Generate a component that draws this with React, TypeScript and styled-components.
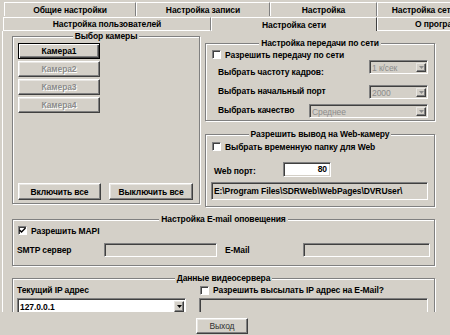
import styled, { createGlobalStyle } from 'styled-components';

const GlobalStyle = createGlobalStyle`
  html, body {
    margin: 0;
    padding: 0;
    background: #d4d0c8;
  }
  body {
    font-family: 'Liberation Sans', Arial, sans-serif;
    font-size: 8.5px;
    letter-spacing: -0.1px;
    font-weight: bold;
    color: #000;
  }
  * {
    box-sizing: border-box;
  }
`;

const Window = styled.div`
  width: 450px;
  height: 335px;
  overflow: hidden;
  background: #d4d0c8;
  display: flex;
  flex-direction: column;
`;

const TabRow = styled.div<{ $top?: boolean }>`
  display: flex;
  flex: none;
  height: 14px;
  margin-top: ${(p) => (p.$top ? 2 : 1)}px;
  padding-left: ${(p) => (p.$top ? 4 : 3)}px;
  white-space: nowrap;
`;

const Tab = styled.div<{ $w: number; $active?: boolean; $bottom?: boolean }>`
  flex: none;
  width: ${(p) => p.$w}px;
  height: 100%;
  border-top: 1px solid #fff;
  border-left: 1px solid #fff;
  border-right: 1px solid ${(p) => (p.$active ? '#404040' : '#808080')};
  border-bottom: ${(p) => (p.$bottom && !p.$active ? '1px solid #fff' : 'none')};
  display: flex;
  align-items: center;
  justify-content: center;
  line-height: 12px;
  overflow: hidden;
`;

const Page = styled.div`
  flex: none;
  margin-left: 2px;
  width: 460px;
  height: 281px;
  overflow: hidden;
  border-left: 1px solid #fff;
  padding-left: 9px;
`;

const TopGrid = styled.div`
  display: grid;
  grid-template-columns: 188px 230px;
  column-gap: 5px;
  align-items: start;
`;

const Group = styled.div<{ $h?: number; $mt?: number; $w?: number }>`
  display: flex;
  flex-direction: column;
  width: ${(p) => (p.$w ? `${p.$w}px` : 'auto')};
  height: ${(p) => (p.$h ? `${p.$h}px` : 'auto')};
  margin-top: ${(p) => p.$mt ?? 0}px;
  border: 1px solid #808080;
  box-shadow: inset 1px 1px #fff, 1px 1px #fff;
`;

const GroupTitle = styled.div`
  align-self: center;
  margin-top: -6px;
  height: 11px;
  line-height: 11px;
  padding: 0 2px;
  background: #d4d0c8;
  white-space: nowrap;
`;

const CamList = styled.div`
  display: flex;
  flex-direction: column;
  gap: 2px;
  margin-top: 1px;
  padding-left: 5px;
`;

const Button = styled.button<{ $w: number; $h?: number; $default?: boolean; $plain?: boolean }>`
  width: ${(p) => p.$w}px;
  height: ${(p) => p.$h ?? 16}px;
  padding: 0;
  margin: 0;
  background: #d4d0c8;
  font-family: inherit;
  font-size: 8.5px;
  letter-spacing: -0.1px;
  font-weight: ${(p) => (p.$plain ? 'normal' : 'bold')};
  color: ${(p) => (p.$plain ? '#303030' : '#000')};
  border: 1px solid;
  border-color: ${(p) => (p.$default ? '#000' : '#fff #404040 #404040 #fff')};
  box-shadow: ${(p) =>
    p.$default
      ? 'inset 1px 1px #fff, inset -1px -1px #404040, inset -2px -2px #808080'
      : 'inset -1px -1px #808080, inset 1px 1px #e8e6e2'};
  &:disabled {
    color: #8c8c8c;
    text-shadow: 1px 1px #fff;
  }
`;

const BottomButtons = styled.div`
  display: flex;
  gap: 8px;
  margin-top: auto;
  padding: 0 0 3px 5px;
`;

const RightColumn = styled.div`
  display: flex;
  flex-direction: column;
  gap: 13px;
  padding-top: 12px;
`;

const GroupBody = styled.div<{ $pl: number; $pr?: number; $pb?: number }>`
  display: flex;
  flex-direction: column;
  padding: 0 ${(p) => p.$pr ?? 0}px ${(p) => p.$pb ?? 0}px ${(p) => p.$pl}px;
`;

const CheckRow = styled.label<{ $mt?: number; $ml?: number }>`
  display: flex;
  align-items: center;
  gap: 4px;
  height: 11px;
  margin-top: ${(p) => p.$mt ?? 0}px;
  margin-left: ${(p) => p.$ml ?? 0}px;
  white-space: nowrap;
`;

const Box = styled.span`
  flex: none;
  width: 9px;
  height: 9px;
  background: #fff;
  border: 1px solid;
  border-color: #808080 #fff #fff #808080;
  box-shadow: inset 1px 1px #404040;
  display: flex;
  align-items: center;
  justify-content: center;
`;

const SettingRow = styled.div<{ $h: number }>`
  display: flex;
  align-items: flex-start;
  justify-content: space-between;
  height: ${(p) => p.$h}px;
`;

const Label = styled.span<{ $mt?: number; $ml?: number; $w?: number }>`
  display: block;
  line-height: 11px;
  margin-top: ${(p) => p.$mt ?? 0}px;
  margin-left: ${(p) => p.$ml ?? 0}px;
  width: ${(p) => (p.$w ? `${p.$w}px` : 'auto')};
  flex: none;
  white-space: nowrap;
`;

const Field = styled.div<{ $w: number; $h: number; $white?: boolean; $right?: boolean; $ml?: number; $mt?: number }>`
  flex: none;
  width: ${(p) => p.$w}px;
  height: ${(p) => p.$h}px;
  margin-left: ${(p) => p.$ml ?? 0}px;
  margin-top: ${(p) => p.$mt ?? 0}px;
  background: ${(p) => (p.$white ? '#fff' : '#d4d0c8')};
  border: 1px solid;
  border-color: #808080 #fff #fff #808080;
  box-shadow: inset 1px 1px #404040, inset -1px -1px #d4d0c8;
  display: flex;
  align-items: center;
  justify-content: ${(p) => (p.$right ? 'flex-end' : 'flex-start')};
  padding: 0 3px 0 2px;
  white-space: nowrap;
  overflow: hidden;
  line-height: 11px;
`;

const ComboBox = styled.div<{ $w: number; $h: number; $white?: boolean; $disabled?: boolean }>`
  flex: none;
  width: ${(p) => p.$w}px;
  height: ${(p) => p.$h}px;
  background: ${(p) => (p.$white ? '#fff' : '#d4d0c8')};
  border: 1px solid;
  border-color: #808080 #fff #fff #808080;
  box-shadow: inset 1px 1px #404040;
  display: flex;
  align-items: stretch;
  padding: 2px 1px 1px 2px;
  color: ${(p) => (p.$disabled ? '#8c8c8c' : '#000')};
  font-weight: ${(p) => (p.$disabled ? 'normal' : 'bold')};
`;

const ComboText = styled.span`
  flex: 1;
  display: flex;
  align-items: center;
  line-height: 10px;
  white-space: nowrap;
`;

const ComboArrow = styled.span`
  flex: none;
  width: 10px;
  max-height: 11px;
  background: #d4d0c8;
  border: 1px solid;
  border-color: #e8e6e2 #404040 #404040 #e8e6e2;
  box-shadow: inset -1px -1px #808080;
  display: flex;
  align-items: center;
  justify-content: center;
`;

const PortRow = styled.div`
  display: flex;
  align-items: center;
  height: 15px;
  margin-top: 10px;
`;

const MailRow = styled.div`
  display: grid;
  grid-template-columns: 87px 113px 86px 127px;
  align-items: center;
  height: 14px;
  margin-top: 7px;
`;

const IpRow = styled.div<{ $h: number; $mt?: number }>`
  display: grid;
  grid-template-columns: 182px 229px;
  align-items: center;
  height: ${(p) => p.$h}px;
  margin-top: ${(p) => p.$mt ?? 0}px;
`;

const Footer = styled.div`
  display: flex;
  padding: 6px 0 0 196px;
`;

const Check = ({ checked }: { checked?: boolean }) => (
  <Box>
    {checked && (
      <svg width="7" height="7" viewBox="0 0 7 7">
        <path d="M0.5 3 L2.5 5 L6.5 1" stroke="#000" strokeWidth="1.4" fill="none" />
      </svg>
    )}
  </Box>
);

const Combo = ({
  value,
  w,
  h,
  white,
  disabled,
}: {
  value: string;
  w: number;
  h: number;
  white?: boolean;
  disabled?: boolean;
}) => (
  <ComboBox $w={w} $h={h} $white={white} $disabled={disabled}>
    <ComboText>{value}</ComboText>
    <ComboArrow>
      <svg width="5" height="3" viewBox="0 0 5 3">
        <path d="M0 0 H5 L2.5 3 Z" fill={disabled ? '#8c8c8c' : '#000'} />
      </svg>
    </ComboArrow>
  </ComboBox>
);

const cameras = ['Камера1', 'Камера2', 'Камера3', 'Камера4'];

export default function App() {
  return (
    <>
      <GlobalStyle />
      <Window>
        <TabRow $top>
          <Tab $w={132}>Общие настройки</Tab>
          <Tab $w={134}>Настройка записи</Tab>
          <Tab $w={107}>Настройка</Tab>
          <Tab $w={110}>Настройка сетевых</Tab>
        </TabRow>
        <TabRow>
          <Tab $w={208} $bottom>
            Настройка пользователей
          </Tab>
          <Tab $w={166} $bottom $active>
            Настройка сети
          </Tab>
          <Tab $w={130} $bottom>
            О программе
          </Tab>
        </TabRow>
        <Page>
          <TopGrid>
            <Group $h={168} $mt={5}>
              <GroupTitle>Выбор камеры</GroupTitle>
              <CamList>
                {cameras.map((c, i) => (
                  <Button key={c} $w={82} $default={i === 0} disabled={i !== 0}>
                    {c}
                  </Button>
                ))}
              </CamList>
              <BottomButtons>
                <Button $w={83} $h={17}>
                  Включить все
                </Button>
                <Button $w={84} $h={17}>
                  Выключить все
                </Button>
              </BottomButtons>
            </Group>
            <RightColumn>
              <Group>
                <GroupTitle>Настройка передачи по сети</GroupTitle>
                <GroupBody $pl={6} $pr={6} $pb={2}>
                  <CheckRow>
                    <Check />
                    Разрешить передачу по сети
                  </CheckRow>
                  <SettingRow $h={25}>
                    <Label $mt={7} $ml={6}>
                      Выбрать частоту кадров:
                    </Label>
                    <Combo value="1 к/сек" w={59} h={14} disabled />
                  </SettingRow>
                  <SettingRow $h={19}>
                    <Label $mt={1} $ml={6}>
                      Выбрать начальный порт
                    </Label>
                    <Combo value="2000" w={59} h={14} disabled />
                  </SettingRow>
                  <SettingRow $h={14}>
                    <Label $mt={1} $ml={6}>
                      Выбрать качество
                    </Label>
                    <Combo value="Среднее" w={119} h={14} disabled />
                  </SettingRow>
                </GroupBody>
              </Group>
              <Group>
                <GroupTitle>Разрешить вывод на Web-камеру</GroupTitle>
                <GroupBody $pl={6} $pb={6}>
                  <CheckRow $mt={1}>
                    <Check />
                    Выбрать временную папку для Web
                  </CheckRow>
                  <PortRow>
                    <Label $ml={2} $w={69} $mt={3}>
                      Web порт:
                    </Label>
                    <Field $w={48} $h={15} $white $right>
                      80
                    </Field>
                  </PortRow>
                  <Field $w={217} $h={18} $ml={-1} $mt={5}>
                    E:\Program Files\SDRWeb\WebPages\DVRUser\
                  </Field>
                </GroupBody>
              </Group>
            </RightColumn>
          </TopGrid>
          <Group $w={423} $mt={12}>
            <GroupTitle>Настройка E-mail оповещения</GroupTitle>
            <GroupBody $pl={4} $pb={8}>
              <CheckRow $ml={1}>
                <Check checked />
                Разрешить MAPI
              </CheckRow>
              <MailRow>
                <Label>SMTP сервер</Label>
                <Field $w={113} $h={14} />
                <Label $ml={8}>E-Mail</Label>
                <Field $w={127} $h={14} />
              </MailRow>
            </GroupBody>
          </Group>
          <Group $w={423} $h={60} $mt={12}>
            <GroupTitle>Данные видеосервера</GroupTitle>
            <GroupBody $pl={4}>
              <IpRow $h={12}>
                <Label>Текущий IP адрес</Label>
                <CheckRow $ml={1}>
                  <Check />
                  Разрешить высылать IP адрес на E-Mail?
                </CheckRow>
              </IpRow>
              <IpRow $h={17} $mt={2}>
                <Combo value="127.0.0.1" w={169} h={17} white />
                <Field $w={229} $h={17} />
              </IpRow>
            </GroupBody>
          </Group>
        </Page>
        <Footer>
          <Button $w={52} $h={16} $plain>
            Выход
          </Button>
        </Footer>
      </Window>
    </>
  );
}
